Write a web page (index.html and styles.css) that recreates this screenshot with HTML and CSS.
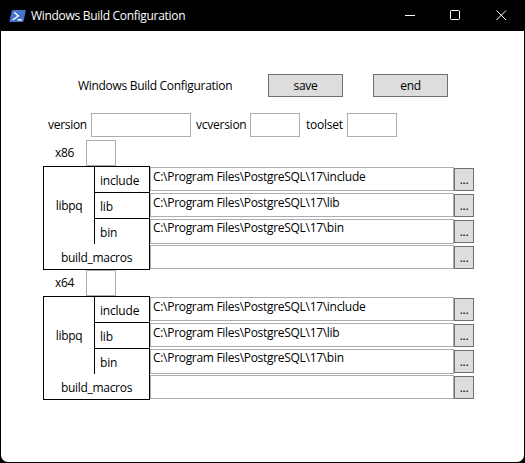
FILE: index.html
```html
<!DOCTYPE html>
<html lang="en">
<head>
<meta charset="utf-8">
<title>Windows Build Configuration</title>
<link rel="stylesheet" href="styles.css">
</head>
<body>
<div class="window">
  <header class="titlebar">
    <svg class="app-icon" width="18" height="14" viewBox="0 0 18 14">
      <path d="M3.7 1H16.2Q17 1 16.8 1.8L14.5 12.2Q14.3 13 13.5 13H1Q.2 13 .4 12.2L2.8 1.8Q3 1 3.7 1Z" fill="#4474cc"/>
      <path d="M5.2 3.3L9.3 7L3.6 11M8.8 10.8H12.8" fill="none" stroke="#fff" stroke-width="1.4"/>
    </svg>
    <span class="caption">Windows Build Configuration</span>
    <svg class="controls" width="120" height="31" viewBox="0 0 120 31" fill="none" stroke="#fff">
      <path d="M0 15.5H10"/>
      <rect x="45.5" y="10.5" width="9" height="9" rx=".8"/>
      <path d="M91.5 10.5L101 20M101 10.5L91.5 20"/>
    </svg>
  </header>
  <main class="content">
    <div class="heading">
      <span class="title">Windows Build Configuration</span>
      <button class="btn">save</button>
      <button class="btn">end</button>
    </div>
    <div class="fields">
      <label class="l-version">version</label><input class="box wide">
      <label class="l-vc">vcversion</label><input class="box">
      <label class="l-tool">toolset</label><input class="box">
    </div>
    <section class="group">
      <div class="arch"><label>x86</label><input class="box"></div>
      <div class="settings">
        <div class="names">
          <div class="libpq">libpq</div>
          <div class="name">include</div>
          <div class="name">lib</div>
          <div class="name last">bin</div>
          <div class="macros">build_macros</div>
        </div>
        <div class="paths">
          <div class="row"><input class="box path" value="C:\Program Files\PostgreSQL\17\include"><button class="btn browse">...</button></div>
          <div class="row"><input class="box path" value="C:\Program Files\PostgreSQL\17\lib"><button class="btn browse">...</button></div>
          <div class="row"><input class="box path tall" value="C:\Program Files\PostgreSQL\17\bin"><button class="btn browse">...</button></div>
          <div class="row"><input class="box path"><button class="btn browse">...</button></div>
        </div>
      </div>
    </section>
    <section class="group">
      <div class="arch"><label>x64</label><input class="box"></div>
      <div class="settings">
        <div class="names">
          <div class="libpq">libpq</div>
          <div class="name">include</div>
          <div class="name">lib</div>
          <div class="name last">bin</div>
          <div class="macros">build_macros</div>
        </div>
        <div class="paths">
          <div class="row"><input class="box path" value="C:\Program Files\PostgreSQL\17\include"><button class="btn browse">...</button></div>
          <div class="row"><input class="box path" value="C:\Program Files\PostgreSQL\17\lib"><button class="btn browse">...</button></div>
          <div class="row"><input class="box path tall" value="C:\Program Files\PostgreSQL\17\bin"><button class="btn browse">...</button></div>
          <div class="row"><input class="box path"><button class="btn browse">...</button></div>
        </div>
      </div>
    </section>
  </main>
</div>
</body>
</html>
```
FILE: styles.css
```css
* { box-sizing: border-box; }
body { margin: 0; background: #000; overflow: hidden; }
body, input, button {
  font: 12px/16px "Segoe UI", "Open Sans", "Noto Sans", sans-serif;
  letter-spacing: -0.3px;
  color: #000;
}
.window { width: 525px; height: 463px; padding: 0 1px 1px; background: #000; }
.titlebar { height: 31px; display: flex; align-items: center; padding-left: 8px; color: #fff; }
.caption { margin-left: 4px; flex: 1; white-space: nowrap; }
.controls { margin-right: -1px; }
.content { height: 431px; padding: 43px 50px 0 42px; background: #fff; border-radius: 0 0 7px 7px; }
.heading { display: flex; align-items: center; height: 23px; padding-left: 35px; }
.title { width: 190px; white-space: nowrap; }
.btn { width: 75px; height: 23px; padding: 0; border: 1px solid #707070; background: #ddd; border-radius: 0; }
.btn + .btn { margin-left: 30px; }
.box { display: block; width: 50px; height: 24px; padding: 0 2px; margin: 0; border: 1px solid #abadb3; border-radius: 0; background: #fff; outline: 0; }
.fields { display: flex; align-items: center; height: 24px; margin: 16px 0 3px; padding-left: 5px; }
.l-version { width: 43px; }
.l-vc { width: 54px; margin-left: 5px; letter-spacing: -0.25px; }
.l-tool { width: 42px; margin-left: 6px; margin-right: -1px; letter-spacing: -0.25px; }
.fields .wide { width: 100px; }
.group { height: 130px; }
.arch { height: 26px; display: flex; align-items: center; padding-left: 12px; }
.arch label { width: 31px; }
.arch .box { width: 30px; height: 26px; }
.settings { display: flex; height: 104px; }
.names { width: 107px; border: 1px solid #000; display: grid; grid-template-columns: 51px 54px; grid-template-rows: 26px 26px 25px 25px; }
.libpq { grid-row: 1 / 4; display: flex; align-items: center; justify-content: center; border-right: 1px solid #000; }
.name { border-bottom: 1px solid #000; padding: 6px 0 0 5px; letter-spacing: -0.2px; }
.name.last { border-bottom: 0; }
.macros { grid-column: 1 / 3; display: flex; align-items: center; justify-content: center; padding-top: 2px; }
.row { display: flex; height: 26px; padding-top: 1px; }
.path { width: 304px; padding-bottom: 6px; }
.path.tall { height: 25px; padding-bottom: 8px; }
.browse { width: 20px; margin-top: 1px; }
```
